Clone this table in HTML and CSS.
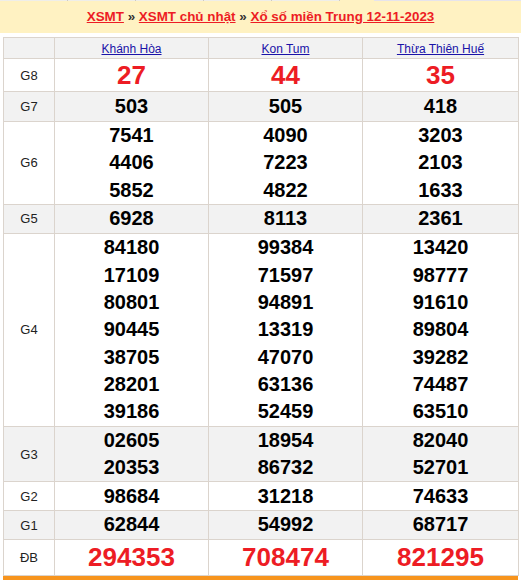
FILE: index.html
```html
<!DOCTYPE html>
<html lang="vi">
<head>
<meta charset="utf-8">
<title>XSMT 12-11-2023</title>
<link rel="stylesheet" href="styles.css">
</head>
<body>
<div class="tabs"><span class="tab"></span><span class="tab"></span><span class="tab"></span><span class="tab"></span><span class="tab"></span><span class="tab active"></span><span class="tab rest"></span></div>
<div class="title">
  <a href="#">XSMT</a> <span class="sep">»</span> <a href="#">XSMT chủ nhật</a> <span class="sep">»</span> <a href="#">Xổ số miền Trung 12-11-2023</a>
</div>
<table class="result">
  <colgroup><col class="c0"><col class="c1"><col class="c2"><col class="c3"></colgroup>
  <tr class="r-head alt">
    <th></th>
    <th><a href="#">Khánh Hòa</a></th>
    <th><a href="#">Kon Tum</a></th>
    <th><a href="#">Thừa Thiên Huế</a></th>
  </tr>
  <tr class="r-g8">
    <td class="lbl">G8</td>
    <td><div class="big">27</div></td>
    <td><div class="big">44</div></td>
    <td><div class="big">35</div></td>
  </tr>
  <tr class="r-g7 alt">
    <td class="lbl">G7</td>
    <td><div class="n">503</div></td>
    <td><div class="n">505</div></td>
    <td><div class="n">418</div></td>
  </tr>
  <tr class="r-g6">
    <td class="lbl">G6</td>
    <td><div class="n">7541</div><div class="n">4406</div><div class="n">5852</div></td>
    <td><div class="n">4090</div><div class="n">7223</div><div class="n">4822</div></td>
    <td><div class="n">3203</div><div class="n">2103</div><div class="n">1633</div></td>
  </tr>
  <tr class="r-g5 alt">
    <td class="lbl">G5</td>
    <td><div class="n">6928</div></td>
    <td><div class="n">8113</div></td>
    <td><div class="n">2361</div></td>
  </tr>
  <tr class="r-g4">
    <td class="lbl">G4</td>
    <td><div class="n">84180</div><div class="n">17109</div><div class="n">80801</div><div class="n">90445</div><div class="n">38705</div><div class="n">28201</div><div class="n">39186</div></td>
    <td><div class="n">99384</div><div class="n">71597</div><div class="n">94891</div><div class="n">13319</div><div class="n">47070</div><div class="n">63136</div><div class="n">52459</div></td>
    <td><div class="n">13420</div><div class="n">98777</div><div class="n">91610</div><div class="n">89804</div><div class="n">39282</div><div class="n">74487</div><div class="n">63510</div></td>
  </tr>
  <tr class="r-g3 alt">
    <td class="lbl">G3</td>
    <td><div class="n">02605</div><div class="n">20353</div></td>
    <td><div class="n">18954</div><div class="n">86732</div></td>
    <td><div class="n">82040</div><div class="n">52701</div></td>
  </tr>
  <tr class="r-g2">
    <td class="lbl">G2</td>
    <td><div class="n">98684</div></td>
    <td><div class="n">31218</div></td>
    <td><div class="n">74633</div></td>
  </tr>
  <tr class="r-g1 alt">
    <td class="lbl">G1</td>
    <td><div class="n">62844</div></td>
    <td><div class="n">54992</div></td>
    <td><div class="n">68717</div></td>
  </tr>
  <tr class="r-db">
    <td class="lbl">ĐB</td>
    <td><div class="big">294353</div></td>
    <td><div class="big">708474</div></td>
    <td><div class="big">821295</div></td>
  </tr>
</table>
<div class="footer-bar"></div>
</body>
</html>
```
FILE: styles.css
```css
html, body {
  margin: 0;
  padding: 0;
  background: #fff;
  font-family: "Liberation Sans", Arial, sans-serif;
}
.tabs {
  display: flex;
  height: 1px;
  background: #fff2c2;
}
.tab {
  width: 67px;
  background: #efeee9;
  border-right: 1px solid #cfcac0;
}
.tab.active {
  width: 32px;
  background: #fff2c2;
  border-right: none;
  margin-left: auto;
}
.tab.rest {
  width: 147px;
  background: #e6e4ec;
  border-right: none;
}
.title {
  height: 32px;
  background: #fff2c2;
  text-align: center;
  font-size: 13.4px;
  font-weight: bold;
  line-height: 32px;
}
.title a {
  color: #ed1c24;
  text-decoration: underline;
}
.title .sep {
  color: #333;
}
.result {
  margin: 4px 0 0 3px;
  width: 515px;
  border-collapse: collapse;
  table-layout: fixed;
}
.c0 { width: 51px; }
.c1 { width: 154px; }
.c2 { width: 154px; }
.c3 { width: 156px; }
.result th,
.result td {
  border: 1px solid #dbd4cd;
  padding: 0;
  text-align: center;
  vertical-align: middle;
}
.result tr.alt th,
.result tr.alt td {
  background: #f2f2f2;
}
.result th a {
  font-size: 12px;
  font-weight: normal;
  color: #1a13a8;
  text-decoration: underline;
}
.lbl {
  font-size: 13px;
  color: #222;
}
.n {
  font-size: 20px;
  font-weight: bold;
  color: #000;
  line-height: 27.3px;
}
.big {
  font-size: 26px;
  font-weight: bold;
  color: #ed1c24;
  line-height: 30px;
}
.r-head { height: 21px; }
.r-g8 { height: 33px; }
.r-g7 { height: 30px; }
.r-g6 { height: 82px; }
.r-g5 { height: 29px; }
.r-g4 { height: 193px; }
.r-g3 { height: 55px; }
.r-g2 { height: 29px; }
.r-g1 { height: 28px; }
.r-db { height: 36px; }
.footer-bar {
  margin: 0 0 0 3px;
  width: 515px;
  height: 6px;
  background: #f7941d;
}
```
